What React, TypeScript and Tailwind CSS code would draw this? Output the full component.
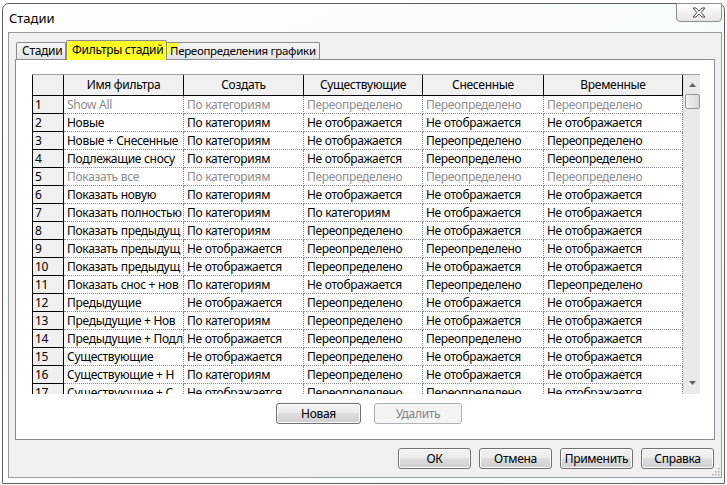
import React from "react";

type Row = [string, string, string, string, string, boolean];

const rows: Row[] = [
  ["Show All", "По категориям", "Переопределено", "Переопределено", "Переопределено", true],
  ["Новые", "По категориям", "Не отображается", "Не отображается", "Не отображается", false],
  ["Новые + Снесенные", "По категориям", "Не отображается", "Переопределено", "Переопределено", false],
  ["Подлежащие сносу", "По категориям", "Не отображается", "Переопределено", "Переопределено", false],
  ["Показать все", "По категориям", "Переопределено", "Переопределено", "Переопределено", true],
  ["Показать новую", "По категориям", "Не отображается", "Не отображается", "Не отображается", false],
  ["Показать полностью", "По категориям", "По категориям", "Не отображается", "Не отображается", false],
  ["Показать предыдущ", "По категориям", "Переопределено", "Не отображается", "Не отображается", false],
  ["Показать предыдущ", "Не отображается", "Переопределено", "Переопределено", "Не отображается", false],
  ["Показать предыдущ", "Не отображается", "Переопределено", "Не отображается", "Не отображается", false],
  ["Показать снос + нов", "По категориям", "Не отображается", "Переопределено", "Переопределено", false],
  ["Предыдущие", "Не отображается", "Переопределено", "Не отображается", "Не отображается", false],
  ["Предыдущие + Нов", "По категориям", "Переопределено", "Не отображается", "Не отображается", false],
  ["Предыдущие + Подл", "Не отображается", "Переопределено", "Переопределено", "Не отображается", false],
  ["Существующие", "Не отображается", "Переопределено", "Не отображается", "Не отображается", false],
  ["Существующие + Н", "По категориям", "Переопределено", "Не отображается", "Не отображается", false],
  ["Существующие + С", "Не отображается", "Переопределено", "Переопределено", "Не отображается", false],
];

const headers = ["Имя фильтра", "Создать", "Существующие", "Снесенные", "Временные"];

const btn =
  "w-[73px] h-[21px] flex items-center justify-center rounded-[3px] border border-[#707070] bg-[linear-gradient(#f2f2f2,#ebebeb_50%,#dddddd_50%,#cfcfcf)] shadow-[inset_0_0_0_1px_#fbfbfb] text-black";

export default function App() {
  return (
    <div className="w-[727px] h-[485px] bg-white overflow-hidden pt-[3px] pl-[2px] font-['Noto_Sans','Liberation_Sans',sans-serif] text-[12px] tracking-[-0.3px] text-black">
      <div className="w-[723px] h-[481px] border border-[#5f5f5f] rounded-t-[7px] bg-[linear-gradient(160deg,#ffffff,#f5fbfd_40%,#ffffff_60%,#f3f9fb)]">
        {/* title bar */}
        <div className="h-[28px] flex">
          <div className="pl-[6px] pt-[5px] leading-[18px] text-[13px] tracking-normal">Стадии</div>
          <div className="ml-auto mr-[2px] -mt-px w-[46px] h-[19px] border border-[#8d8d8d] rounded-b-[4px] bg-[linear-gradient(#ffffff,#f1f1f1_50%,#e6e6e6)] flex items-center justify-center">
            <svg width="14" height="11" viewBox="0 0 14 11">
              <polygon
                points="1,1 4,1 7,4 10,1 13,1 9,5.5 13,10 10,10 7,7 4,10 1,10 5,5.5"
                fill="#ffffff"
                stroke="#4c4c4c"
                strokeWidth="1"
                strokeLinejoin="round"
              />
            </svg>
          </div>
        </div>

        {/* client area */}
        <div className="ml-[5px] w-[714px] h-[446px] border border-[#9a9a9a] bg-[#f0f0f0] pl-[6px] pt-[7px] relative">
          {/* tabs */}
          <div className="h-[19px] flex items-end ml-px relative whitespace-nowrap">
            <div className="w-[50px] h-[17px] border border-b-0 border-[#898c95] rounded-t-[2px] bg-[linear-gradient(#f6f6f6,#e4e4e4)] pl-[5px] leading-[16px]">
              Стадии
            </div>
            <div className="relative z-10 w-[101px] h-[20px] -mb-px border border-b-0 border-[#898c95] rounded-t-[2px] bg-[#ffff22] pl-[5px] leading-[18px]">
              Фильтры стадий
            </div>
            <div className="h-[17px] -ml-px border border-b-0 border-[#898c95] rounded-t-[2px] bg-[linear-gradient(#f6f6f6,#e4e4e4)] px-[3px] leading-[16px] relative text-[11.5px] tracking-[-0.3px]">
              <div className="absolute left-0 top-0 w-[13px] h-[12px] bg-[#ffff22] [clip-path:polygon(0_0,100%_0,20%_100%,0_100%)]" />
              <span className="relative">Переопределения графики</span>
            </div>
          </div>

          {/* tab panel */}
          <div className="w-[700px] h-[381px] border border-[#898c95] bg-white pl-[16px] pt-[14px]">
            {/* table */}
            <div className="w-[668px] h-[320px] flex border-t border-[#a0a0a0] overflow-hidden">
              <div className="w-[651px] border-l border-black overflow-hidden">
                <div className="grid grid-cols-[31px_120px_120px_119px_121px_139px]">
                  <div className="h-[21px] bg-[#f0f0f0] border-r border-b border-black" />
                  {headers.map((h) => (
                    <div
                      key={h}
                      className="h-[21px] bg-[#f0f0f0] border-r border-b border-black flex items-center justify-center whitespace-nowrap"
                    >
                      {h}
                    </div>
                  ))}
                  {rows.map((r, i) => (
                    <React.Fragment key={i}>
                      <div className="h-[18px] bg-[#f0f0f0] border-r border-b border-black pl-[2px] leading-[17px] text-black">
                        {i + 1}
                      </div>
                      {r.slice(0, 5).map((c, j) => (
                        <div
                          key={j}
                          className={
                            "h-[18px] border-r border-b border-dotted border-[#8c8c8c] pl-[3px] leading-[17px] whitespace-nowrap overflow-hidden " +
                            (r[5] ? "text-[#8d8d8d]" : "text-black")
                          }
                        >
                          {c as string}
                        </div>
                      ))}
                    </React.Fragment>
                  ))}
                </div>
              </div>
              {/* scrollbar */}
              <div className="w-[17px] h-full bg-[#eaeaea] border-l border-[#e0e0e0] flex flex-col items-center">
                <div className="h-[19px] w-full flex items-center justify-center">
                  <svg width="7" height="4" viewBox="0 0 7 4">
                    <polygon points="0,4 3.5,0 7,4" fill="#606060" />
                  </svg>
                </div>
                <div className="w-[15px] h-[15px] rounded-[2px] border border-[#979797] bg-[linear-gradient(90deg,#f3f3f3,#e6e6e6_50%,#d7d7d7)]" />
                <div className="flex-1" />
                <div className="h-[20px] w-full flex items-start justify-center pt-[7px]">
                  <svg width="7" height="4" viewBox="0 0 7 4">
                    <polygon points="0,0 3.5,4 7,0" fill="#606060" />
                  </svg>
                </div>
              </div>
            </div>

            {/* add / delete */}
            <div className="mt-[9px] flex gap-[13px] pl-[244px]">
              <div className={btn + " !w-[85px]"}>Новая</div>
              <div className="w-[88px] h-[21px] flex items-center justify-center rounded-[3px] border border-[#adb2b5] bg-[#f4f4f4] text-[#838383]">
                Удалить
              </div>
            </div>
          </div>

          {/* dialog buttons */}
          <div className="mt-[8px] flex justify-end gap-[8px] pr-[7px]">
            <div className={btn}>ОК</div>
            <div className={btn}>Отмена</div>
            <div className={btn}>Применить</div>
            <div className={btn}>Справка</div>
          </div>

          {/* size grip */}
          <svg className="absolute right-[1px] bottom-[1px]" width="10" height="10" viewBox="0 0 10 10">
            {[
              [8, 2],
              [8, 5],
              [5, 5],
              [8, 8],
              [5, 8],
              [2, 8],
            ].map(([x, y], k) => (
              <rect key={k} x={x} y={y} width="1.5" height="1.5" fill="#a8a8a8" />
            ))}
          </svg>
        </div>
      </div>
    </div>
  );
}
